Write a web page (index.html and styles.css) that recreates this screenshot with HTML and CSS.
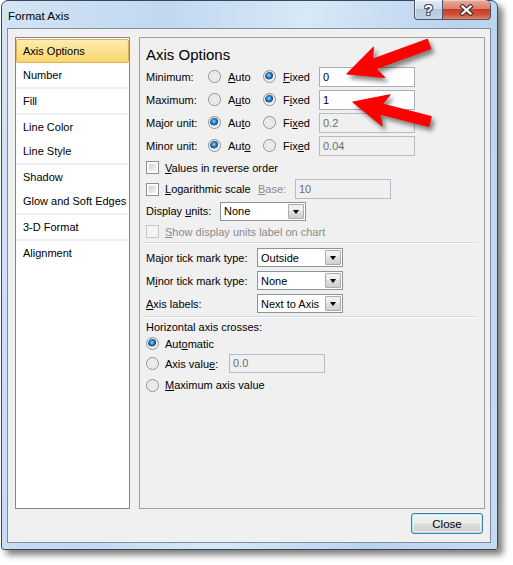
FILE: index.html
```html
<!DOCTYPE html>
<html>
<head>
<meta charset="utf-8">
<title>Format Axis</title>
<link rel="stylesheet" href="styles.css">
</head>
<body>
<div class="window">
  <div class="titlebar">
    <span class="title">Format Axis</span>
    <div class="caption">
      <div class="cbtn help"><span class="q">?</span></div>
      <div class="cbtn close">
        <svg width="15" height="12" viewBox="0 0 15 12"><path d="M3.5 2.5 L11.5 9.5 M11.5 2.5 L3.5 9.5" stroke="#45312c" stroke-width="4.4" stroke-linecap="square" fill="none"/><path d="M3.5 2.5 L11.5 9.5 M11.5 2.5 L3.5 9.5" stroke="#fff" stroke-width="2.3" stroke-linecap="square" fill="none"/></svg>
      </div>
    </div>
  </div>
  <div class="client">
    <div class="panes">
      <ul class="nav">
        <li class="item active">Axis Options</li>
        <li class="item">Number</li>
        <li class="divider"></li>
        <li class="item">Fill</li>
        <li class="divider"></li>
        <li class="item">Line Color</li>
        <li class="item">Line Style</li>
        <li class="divider"></li>
        <li class="item">Shadow</li>
        <li class="item">Glow and Soft Edges</li>
        <li class="divider"></li>
        <li class="item">3-D Format</li>
        <li class="divider"></li>
        <li class="item">Alignment</li>
      </ul>
      <div class="content">
        <h1 class="heading">Axis Options</h1>
        <div class="bounds">
          <span>Minimum:</span>
          <span class="opt"><span class="radio"></span><span><u>A</u>uto</span></span>
          <span class="opt"><span class="radio on"></span><span><u>F</u>ixed</span></span>
          <span class="field">0</span>

          <span>Maximum:</span>
          <span class="opt"><span class="radio"></span><span>A<u>u</u>to</span></span>
          <span class="opt"><span class="radio on"></span><span>F<u>i</u>xed</span></span>
          <span class="field">1</span>

          <span>Major unit:</span>
          <span class="opt"><span class="radio on"></span><span>Au<u>t</u>o</span></span>
          <span class="opt"><span class="radio"></span><span>Fi<u>x</u>ed</span></span>
          <span class="field off">0.2</span>

          <span>Minor unit:</span>
          <span class="opt"><span class="radio on"></span><span>Aut<u>o</u></span></span>
          <span class="opt"><span class="radio"></span><span>Fix<u>e</u>d</span></span>
          <span class="field off">0.04</span>
        </div>

        <div class="row r-values"><span class="check"></span><span class="lbl"><u>V</u>alues in reverse order</span></div>
        <div class="row r-log"><span class="check"></span><span class="lbl log-lbl"><u>L</u>ogarithmic scale</span><span class="dim base-lbl"><u>B</u>ase:</span><span class="field off base-field">10</span></div>
        <div class="row r-units"><span class="units-lbl">Display <u>u</u>nits:</span><span class="combo"><span class="combo-text">None</span><span class="drop"></span></span></div>
        <div class="row r-show"><span class="check off"></span><span class="lbl dim"><u>S</u>how display units label on chart</span></div>

        <div class="rule rule-a"></div>

        <div class="ticks">
          <span>Ma<u>j</u>or tick mark type:</span>
          <span class="combo"><span class="combo-text">Outside</span><span class="drop"></span></span>
          <span>M<u>i</u>nor tick mark type:</span>
          <span class="combo"><span class="combo-text">None</span><span class="drop"></span></span>
          <span><u>A</u>xis labels:</span>
          <span class="combo"><span class="combo-text">Next to Axis</span><span class="drop"></span></span>
        </div>

        <div class="rule rule-b"></div>

        <div class="row r-hac">Horizontal axis crosses:</div>
        <div class="row r-auto"><span class="radio on"></span><span class="lbl">Aut<u>o</u>matic</span></div>
        <div class="row r-axval"><span class="radio"></span><span class="lbl axval-lbl">Axis valu<u>e</u>:</span><span class="field off axval-field">0.0</span></div>
        <div class="row r-max"><span class="radio"></span><span class="lbl"><u>M</u>aximum axis value</span></div>
      </div>
    </div>
    <div class="footer">
      <button class="btn">Close</button>
    </div>
  </div>
</div>

<svg class="arrows" width="513" height="565" viewBox="0 0 513 565">
  <polygon points="347,74 373.4,47.3 372.5,59.3 427.3,39.3 430.7,48.7 375.9,68.7 384.4,77.3" />
  <polygon points="353,102 389.9,94.8 382.3,104.2 431.2,116.6 428.8,126.4 379.9,113.9 382.1,125.8" />
</svg>
</body>
</html>
```

FILE: styles.css
```css
* { box-sizing: border-box; }

html, body {
  margin: 0;
  padding: 0;
}

body {
  position: relative;
  width: 513px;
  height: 565px;
  overflow: hidden;
  background: #ffffff;
  font-family: "Liberation Sans", Arial, sans-serif;
  font-size: 11px;
  color: #000;
}

u { text-decoration: underline; text-underline-offset: 1px; }

/* ---------- window frame ---------- */
.window {
  margin-left: 1px;
  width: 497px;
  height: 550px;
  border: 1px solid #38475a;
  border-radius: 7px 7px 3px 3px;
  padding: 0 6px 6px 5px;
  background:
    linear-gradient(100deg, #d3e4f5 0%, #c0d8f0 28%, #d8e8f7 52%, #bad3ed 78%, #c6dbf1 100%);
  box-shadow: 5px 5px 6px rgba(0, 0, 0, 0.5);
  display: flex;
  flex-direction: column;
}

.titlebar {
  height: 27px;
  display: flex;
  align-items: flex-start;
}

.title {
  padding: 8px 0 0 1px;
  line-height: 14px;
  font-size: 11.6px;
  color: #000;
}

.caption {
  margin-left: auto;
  margin-top: -1px;
  display: flex;
}

.cbtn {
  height: 20px;
  border: 1px solid #4a5668;
  border-top: none;
  display: flex;
  align-items: center;
  justify-content: center;
}

.help {
  width: 29px;
  border-radius: 0 0 0 4px;
  background: linear-gradient(#e3ecf7 0%, #d1deee 45%, #b6c7dd 50%, #c3d4e9 100%);
  box-shadow: inset 0 1px 0 rgba(255,255,255,0.6), inset 1px 0 0 rgba(255,255,255,0.5);
}

.q {
  font-family: "Liberation Sans", sans-serif;
  font-weight: bold;
  font-size: 14px;
  line-height: 14px;
  color: #fff;
  text-shadow: 1px 0 0 #4c5766, -1px 0 0 #4c5766, 0 1px 0 #4c5766, 0 -1px 0 #4c5766,
               1px 1px 0 #4c5766, -1px -1px 0 #4c5766, 1px -1px 0 #4c5766, -1px 1px 0 #4c5766;
}

.close {
  width: 48px;
  border-left: none;
  border-radius: 0 6px 4px 0;
  background: linear-gradient(#e9ab9e 0%, #dc7f6b 45%, #c63d23 50%, #d0553b 80%, #e4876b 100%);
  box-shadow: inset 0 1px 0 rgba(255,255,255,0.4);
}

.close svg { display: block; }

/* ---------- client ---------- */
.client {
  flex: 1;
  border: 1px solid #7d8ea3;
  background: #f0f0f0;
  padding: 8px 5px 8px 7px;
  display: flex;
  flex-direction: column;
}

.panes {
  height: 472px;
  display: flex;
  gap: 9px;
}

/* ---------- left nav ---------- */
.nav {
  width: 115px;
  margin: 0;
  padding: 1px 0 0;
  list-style: none;
  background: #fff;
  border: 1px solid #828790;
}

.item {
  height: 24px;
  line-height: 24px;
  padding-left: 7px;
  white-space: nowrap;
}

.item.active {
  border: 1px solid #e2b052;
  border-radius: 2px;
  padding-left: 6px;
  line-height: 22px;
  background: linear-gradient(#fdedb1 0%, #fbe18e 50%, #f9d56c 100%);
}

.divider {
  height: 2px;
  background: #eef0f3;
}

/* ---------- right content ---------- */
.content {
  width: 346px;
  border: 1px solid #a0a0a0;
  padding: 7px 0 0 6px;
}

.heading {
  margin: 0;
  font-size: 15px;
  font-weight: normal;
  line-height: 20px;
  height: 20px;
}

.bounds {
  display: grid;
  grid-template-columns: 62px 55px 56px 96px;
  grid-auto-rows: 23px;
  align-items: center;
}

.opt {
  display: flex;
  align-items: center;
  gap: 7px;
}

.radio {
  flex: none;
  width: 13px;
  height: 13px;
  border-radius: 50%;
  border: 1px solid #8d9096;
  background: radial-gradient(circle at 50% 50%, #f2f2f2 0, #e2e2e2 60%, #cfcfcf 100%);
  box-shadow: inset 0 0 0 1px #f7f7f7;
}

.radio.on {
  background:
    radial-gradient(circle at 45% 40%, #b3e2ff 0, #3d96d8 1.6px, #186099 3.2px, #17507f 3.9px, rgba(0,0,0,0) 4.3px),
    radial-gradient(circle at 50% 50%, #f4f4f4 0, #e6e6e6 60%, #d2d2d2 100%);
}

.field {
  height: 20px;
  border: 1px solid #abadb3;
  background: #fff;
  padding-left: 3px;
  line-height: 18px;
  color: #000;
}

.field.off {
  background: #f0f0f0;
  border-color: #b8bcc2;
  color: #6d6d6d;
}

.row {
  display: flex;
  align-items: center;
}

.check {
  flex: none;
  width: 13px;
  height: 13px;
  border: 1px solid #8e8f8f;
  padding: 2px;
  background: linear-gradient(135deg, #cfd1d4 0%, #f4f4f4 100%) content-box, #f8f8f8;
  box-shadow: inset 0 0 0 1px #fff;
}

.check.off {
  border-color: #c7c7c7;
  background: #f4f4f4;
  box-shadow: none;
}

.lbl { margin-left: 6px; }

.dim { color: #8b8b8b; }

.r-values { height: 21px; }
.r-log { height: 22px; }
.log-lbl { width: 93px; }
.base-lbl { width: 37px; }
.base-field { width: 96px; height: 20px; }

.r-units { height: 22px; }
.units-lbl { width: 74px; }

.r-show { height: 19px; }

.combo {
  width: 86px;
  height: 19px;
  border: 1px solid #8f9297;
  background: #fff;
  display: flex;
  align-items: center;
  padding: 1px;
}

.combo-text {
  flex: 1;
  padding-left: 2px;
  white-space: nowrap;
  overflow: hidden;
}

.drop {
  flex: none;
  width: 16px;
  height: 15px;
  border: 1px solid #a9abae;
  border-radius: 1px;
  background: linear-gradient(#f3f3f3 0%, #ececec 45%, #dedede 50%, #d0d0d0 100%);
  display: flex;
  align-items: center;
  justify-content: center;
}

.drop::after {
  content: "";
  width: 0;
  height: 0;
  border-left: 3.5px solid transparent;
  border-right: 3.5px solid transparent;
  border-top: 4px solid #000;
  margin-top: 1px;
}

.rule {
  margin-right: 6px;
  margin-left: -3px;
  height: 2px;
  border-top: 1px solid #d5d9de;
  border-bottom: 1px solid #fdfdfd;
}

.rule-a { margin-top: 1px; margin-bottom: 2px; }
.rule-b { margin-top: 1px; margin-bottom: 0; }

.ticks {
  display: grid;
  grid-template-columns: 111px 86px;
  grid-auto-rows: 23px;
  align-items: center;
}

.r-hac { height: 17px; }
.r-auto { height: 17px; }
.r-axval { height: 23px; }
.axval-lbl { width: 64px; }
.axval-field { width: 96px; height: 19px; line-height: 17px; }
.r-max { height: 20px; }

/* ---------- footer ---------- */
.footer {
  margin-top: 4px;
  padding-right: 2px;
  display: flex;
  justify-content: flex-end;
}

.btn {
  width: 72px;
  height: 21px;
  margin: 0;
  padding: 0;
  font-family: inherit;
  font-size: 11.5px;
  color: #000;
  border: 1px solid #3c7fb1;
  border-radius: 3px;
  background: linear-gradient(#f2f2f2 0%, #ebebeb 48%, #dddddd 52%, #cfcfcf 100%);
  box-shadow: inset 0 0 0 1px rgba(72, 209, 251, 0.35), inset 0 0 0 2px rgba(255,255,255,0.5);
}

/* ---------- annotation arrows ---------- */
.arrows {
  position: absolute;
  left: 0;
  top: 0;
  pointer-events: none;
  filter: drop-shadow(3px 4px 2px rgba(0, 0, 0, 0.45));
}

.arrows polygon {
  fill: #ff0000;
  stroke: #ff0000;
  stroke-width: 1.2;
  stroke-linejoin: round;
}
```
